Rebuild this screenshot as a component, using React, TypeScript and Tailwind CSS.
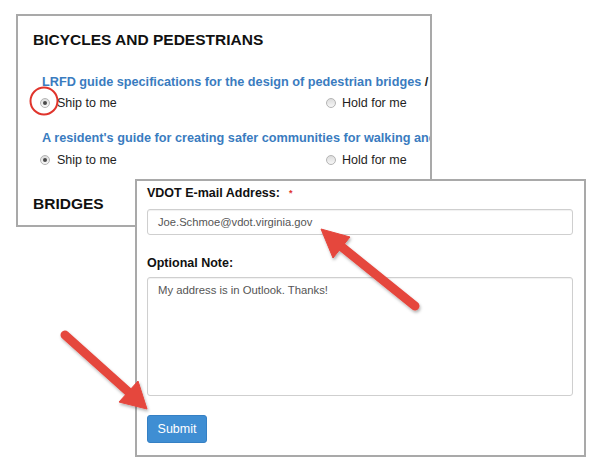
import React from "react";

function Radio({ checked }: { checked?: boolean }) {
  return (
    <span className="flex h-[10px] w-[10px] shrink-0 items-center justify-center rounded-full border border-[#b4b4b4] bg-gradient-to-b from-[#dcdcdc] to-[#f7f7f7]">
      {checked && <span className="h-[4px] w-[4px] rounded-full bg-[#4a4a4a]" />}
    </span>
  );
}

function RadioRow({ ship }: { ship?: boolean }) {
  return (
    <div className="flex h-[16px] items-center pl-[22px] text-[12.5px] leading-[16px] text-[#1e1e1e]">
      <div className="flex w-[286px] items-center gap-[7px]">
        <Radio checked={ship} />
        <span>Ship to me</span>
      </div>
      <div className="flex items-center gap-[6px]">
        <Radio />
        <span>Hold for me</span>
      </div>
    </div>
  );
}

export default function App() {
  return (
    <div
      className="relative h-[472px] w-[600px] overflow-hidden bg-white"
      style={{ fontFamily: '"Liberation Sans", Arial, sans-serif' }}
    >
      {/* Back window */}
      <div className="absolute left-[16px] top-[14px] flex h-[213px] w-[416px] flex-col overflow-hidden border-2 border-[#a9a9a9] bg-white">
        <div className="mt-[14px] pl-[15px] text-[15.5px] font-bold leading-[20px] whitespace-nowrap text-[#111]">
          BICYCLES AND PEDESTRIANS
        </div>
        <div className="mt-[24px] pl-[24px] text-[12.7px] font-bold leading-[16px] whitespace-nowrap text-[#3a7cc0]">
          LRFD guide specifications for the design of pedestrian bridges <span className="text-[#222]">/</span>
        </div>
        <div className="mt-[5px]">
          <RadioRow ship />
        </div>
        <div className="mt-[19px] pl-[24px] text-[12.7px] font-bold leading-[16px] whitespace-nowrap text-[#3a7cc0]">
          A resident's guide for creating safer communities for walking and
        </div>
        <div className="mt-[6px]">
          <RadioRow ship />
        </div>
        <div className="mt-[26px] pl-[15px] text-[15.5px] font-bold leading-[20px] whitespace-nowrap text-[#111]">
          BRIDGES
        </div>
      </div>

      {/* Front window */}
      <div className="absolute left-[135px] top-[179px] flex h-[278px] w-[451px] flex-col border-2 border-[#a9a9a9] bg-white pl-[10px] pr-[11px]">
        <div className="mt-[4px] flex items-start text-[12.5px] font-bold leading-[16px] text-[#111]">
          <span>VDOT E-mail Address:</span>
          <span className="ml-[9px] mt-[3px] text-[9px] leading-[10px] text-[#e0342c]">*</span>
        </div>
        <div className="mt-[8px] flex h-[26px] items-center rounded-[3px] border border-[#cfcfcf] pl-[10px] text-[11.2px] text-[#555] shadow-[inset_0_1px_1px_rgba(0,0,0,0.06)]">
          Joe.Schmoe@vdot.virginia.gov
        </div>
        <div className="mt-[20px] text-[12.5px] font-bold leading-[16px] text-[#111]">Optional Note:</div>
        <div className="mt-[6px] h-[119px] rounded-[3px] border border-[#cfcfcf] pl-[10px] pt-[5px] text-[11.3px] leading-[14px] text-[#555] shadow-[inset_0_1px_1px_rgba(0,0,0,0.06)]">
          My address is in Outlook. Thanks!
        </div>
        <div className="mt-[19px]">
          <button className="flex h-[28px] w-[60px] items-center justify-center rounded-[3px] border border-[#3580c4] bg-[#3f8ed3] text-[12.5px] text-white">
            Submit
          </button>
        </div>
      </div>

      {/* Annotations */}
      <svg className="pointer-events-none absolute left-0 top-0" width="600" height="472" viewBox="0 0 600 472">
        <defs>
          <filter id="sh" x="-20%" y="-20%" width="140%" height="140%">
            <feDropShadow dx="1" dy="2" stdDeviation="1.5" floodColor="#000" floodOpacity="0.3" />
          </filter>
        </defs>
        <circle cx="44" cy="101" r="13.5" fill="none" stroke="#e0342c" strokeWidth="2" />
        <g filter="url(#sh)" fill="#e5463d" stroke="#e5463d">
          <line x1="415" y1="306" x2="340" y2="245.5" strokeWidth="9" strokeLinecap="round" />
          <polygon points="321,229 350,237 333,258" strokeWidth="1" strokeLinejoin="round" />
          <line x1="65" y1="335" x2="128" y2="391.5" strokeWidth="9" strokeLinecap="round" />
          <polygon points="147,409 119,402 138,381" strokeWidth="1" strokeLinejoin="round" />
        </g>
      </svg>
    </div>
  );
}
